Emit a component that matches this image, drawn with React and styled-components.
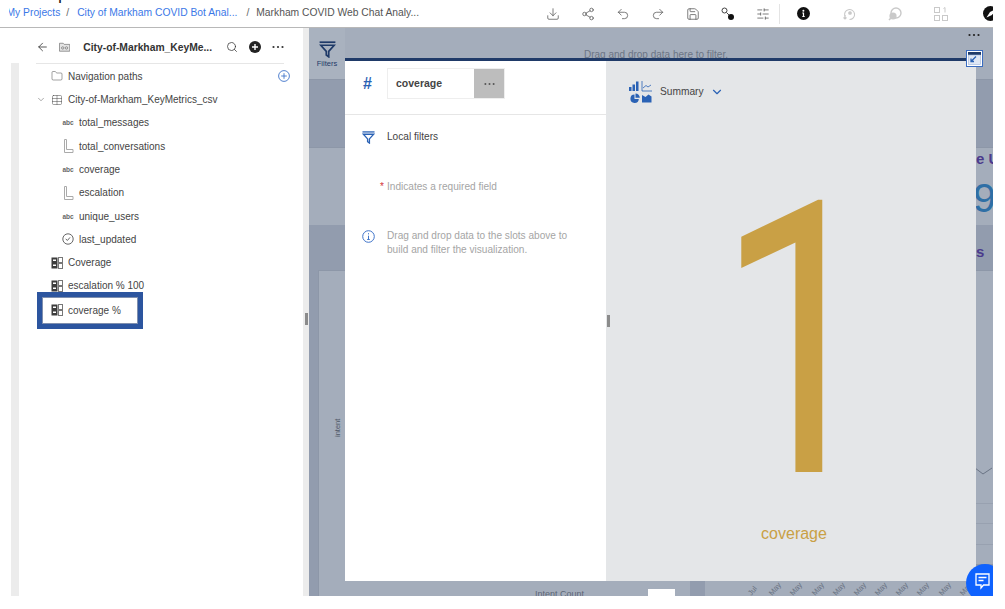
import React from 'react';
import styled, { createGlobalStyle } from 'styled-components';
import { ArrowLeft, ChevronDown, Download, Folder, Redo2, Save, Search, Share2, SlidersHorizontal, Table, Undo2 } from 'lucide-react';

const Global = createGlobalStyle`
  html, body { margin: 0; background: #fff; }
  body { font-family: 'Liberation Sans', Arial, sans-serif; color: #3d3d3d; }
`;

const Frame = styled.div`
  position: relative;
  width: 993px;
  height: 596px;
  overflow: hidden;
  display: flex;
  flex-direction: column;
  background: #fff;
`;

const TopBar = styled.header`
  position: relative;
  height: 27px;
  display: flex;
  align-items: center;
  justify-content: space-between;
  border-bottom: 1px solid #b8b8b8;
  padding-left: 9px;
  flex: none;
`;

// the page title is scrolled almost out of view in the reference
const ClippedTitle = styled.div`
  position: absolute;
  left: 27px;
  top: 0;
  height: 3px;
  overflow: hidden;
  font-size: 18px;
  line-height: 18px;
  color: #222;
  span { display: block; margin-top: -15px; }
`;

const Crumbs = styled.nav`
  display: flex;
  align-items: center;
  overflow: hidden;
  font-size: 10.3px;
  white-space: nowrap;
  height: 100%;
  padding-bottom: 2px;
  box-sizing: border-box;
`;

const Crumb = styled.span`
  color: ${({ current }) => (current ? '#555' : '#3b78e7')};
  margin-left: ${({ $clip }) => ($clip ? '-2.5px' : '0')};
`;

const Slash = styled.span`
  color: #666;
  margin: 0 ${({ wide }) => (wide ? '7px 0 9px' : '8px 0 6px')};
`;

const Tools = styled.div`
  display: flex;
  align-items: center;
  height: 100%;
  flex: none;
  margin-right: -23px;
`;

const ToolSlot = styled.span`
  width: ${({ w }) => w || 35}px;
  flex: none;
  display: flex;
  justify-content: center;
  color: ${({ faded }) => (faded ? '#c9c9c9' : '#555')};
`;

const ToolDivider = styled.span`
  width: 1px;
  height: 20px;
  background: #e4e4e4;
  margin-left: -1px;
  flex: none;
`;

const Body = styled.div`
  flex: 1;
  min-height: 0;
  display: flex;
`;

const Gutter = styled.div`
  width: 8px;
  margin-left: 11px;
  flex: none;
  background: linear-gradient(#fff 35px, #ececec 35px);
`;

const Panel = styled.aside`
  width: 284px;
  flex: none;
  background: #fff;
  padding: 0 19px 0 17px;
  box-sizing: border-box;
`;

const PanelHead = styled.div`
  height: 32px;
  margin-bottom: 0.6px;
  display: flex;
  align-items: center;
  gap: 10px;
  border-bottom: 1px solid #e6e6e6;
  padding-top: 3px;
  box-sizing: content-box;
  color: #333;
`;

const PanelTitle = styled.span`
  font-size: 10.3px;
  font-weight: bold;
  color: #333;
  margin-left: 3px;
  width: 142px;
  white-space: nowrap;
`;

const HeadIcons = styled.div`
  display: flex;
  align-items: center;
  gap: 11px;
`;

const Row = styled.div`
  height: 23.3px;
  display: flex;
  align-items: center;
  gap: 5px;
  font-size: 10px;
  color: #444;
  white-space: nowrap;
  padding-left: ${({ level }) => (level === 2 ? 26 : 15)}px;
`;

const SelectedRow = styled(Row)`
  position: relative;
  background: #fff;
  width: 86px;
  height: 25px;
  margin: 0 0 0 7px;
  padding-left: 8px;
  box-shadow: 0 0 0 1px #7f8fae, 0 0 0 6px #2c559f;
`;

const TypeTag = styled.span`
  width: 12px;
  font-size: 6.5px;
  font-weight: bold;
  color: #666;
  text-align: center;
`;

const Chevron = styled.span`
  display: flex;
  width: 10px;
  margin-left: -15px;
  color: #555;
`;

const AddPath = styled.span`
  margin-left: auto;
  margin-right: -6px;
  display: flex;
  color: #3f74c9;
`;

const Splitter = styled.div`
  width: 6px;
  flex: none;
  background: #ececec;
  display: flex;
  justify-content: center;
  padding-top: 285px;
  box-sizing: border-box;
`;

const Handle = styled.span`
  display: block;
  width: 3px;
  height: 12px;
  background: #8b8b8b;
`;

const Canvas = styled.main`
  position: relative;
  flex: 1;
  min-width: 0;
  display: flex;
  flex-direction: column;
  background: #929cae;
  overflow: hidden;
`;

const FilterBar = styled.div`
  height: 52px;
  flex: none;
  display: flex;
  background: #a4adbb;
  border-bottom: 1px solid #8d97a8;
  box-sizing: border-box;
`;

const FiltersTab = styled.div`
  width: 36px;
  display: flex;
  flex-direction: column;
  align-items: center;
  padding-top: 13px;
  box-sizing: border-box;
  color: #1f3a68;
  font-size: 7.5px;
  gap: 1px;
  background: #a9b2bf;
`;

const DropHint = styled.div`
  flex: 1;
  text-align: center;
  font-size: 10px;
  color: #6c7585;
  padding: 21px 0 0 0;
  margin-left: -26px;
`;

const Band = styled.div`
  height: ${({ h }) => h}px;
  flex: none;
  background: ${({ light }) => (light ? '#a4adbb' : '#929cae')};
  border-top: 1px solid ${({ light }) => (light ? '#8d97a8' : 'transparent')};
  box-sizing: border-box;
  display: flex;
  flex-direction: column;
  align-items: flex-end;
  overflow: hidden;
`;

const EdgeText = styled.span`
  width: 17px;
  white-space: nowrap;
  color: ${({ color }) => color};
  font-size: ${({ size }) => size}px;
  font-weight: ${({ weight }) => weight || 'bold'};
  line-height: ${({ lh }) => lh}px;
  margin-top: ${({ top }) => top || 0}px;
  margin-right: ${({ shift }) => shift || 0}px;
`;

const Cards = styled.div`
  flex: 1;
  min-height: 0;
  display: flex;
  padding-left: 9px;
`;

const GridCard = styled.div`
  flex: 372;
  background: #a4adbb;
  border-top: 1px solid #8d97a8;
  border-left: 1px solid #8d97a8;
  position: relative;
`;

const AxisLabel = styled.span`
  position: absolute;
  left: 14px;
  top: 148px;
  font-size: 7.5px;
  color: #4d5665;
  transform-origin: left top;
  transform: rotate(-90deg) translate(-18px, 0);
`;

const AxisTitle = styled.span`
  position: absolute;
  left: 216px;
  bottom: -3px;
  font-size: 9px;
  color: #5c6676;
`;

const PageTab = styled.span`
  position: absolute;
  left: 329px;
  bottom: 0;
  width: 27px;
  height: 7px;
  background: #fff;
`;

const ChartCard = styled.div`
  width: 288px;
  margin-left: 15px;
  background:
    linear-gradient(transparent 232px, #98a1b0 232px, #98a1b0 233px, transparent 233px),
    linear-gradient(transparent 252px, #98a1b0 252px, #98a1b0 253px, transparent 253px),
    linear-gradient(transparent 273px, #98a1b0 273px, #98a1b0 274px, transparent 274px),
    linear-gradient(transparent 293px, #8d97a8 293px, #8d97a8 295px, transparent 295px),
    #a4adbb;
  border-top: 1px solid #8d97a8;
  position: relative;
  display: flex;
  align-items: flex-end;
  justify-content: flex-end;
  gap: 8.2px;
  padding: 0 0 2px 0;
  box-sizing: border-box;
`;

const Tick = styled.span`
  font-size: 7.5px;
  width: 13px;
  color: #66707f;
  transform: rotate(-50deg);
  flex: none;
`;

const TrendMark = styled.svg`
  position: absolute;
  right: 1px;
  top: 196px;
`;

const Modal = styled.section`
  position: absolute;
  left: 36px;
  top: 30px;
  width: 631px;
  height: 523px;
  display: flex;
  border-top: 3px solid #1f3a68;
  box-sizing: border-box;
`;

const ModalLeft = styled.div`
  width: 261px;
  flex: none;
  background: #fff;
`;

const FieldRow = styled.div`
  height: 54px;
  display: flex;
  align-items: center;
  padding: 0 0 8px 18px;
  box-sizing: border-box;
  border-bottom: 1px solid #e6e6e6;
`;

const Hash = styled.span`
  width: 24px;
  font-size: 16px;
  font-weight: bold;
  color: #2a62b5;
`;

const FieldBox = styled.div`
  width: 118px;
  height: 31px;
  display: flex;
  border: 1px solid #eee;
  box-sizing: border-box;
  align-items: center;
  font-size: 10.5px;
  font-weight: bold;
  color: #444;
  padding-left: 8px;
`;

const FieldName = styled.span`
  margin-top: -2px;
`;

const FieldMore = styled.span`
  width: 30px;
  height: 100%;
  margin-left: auto;
  background: #bdbdbd;
  color: #555;
  display: flex;
  align-items: center;
  justify-content: center;
`;

const InfoRow = styled.div`
  display: flex;
  align-items: ${({ top }) => (top ? 'flex-start' : 'center')};
  padding-left: 17px;
  margin-top: ${({ mt }) => mt}px;
  font-size: 10.1px;
  line-height: 14px;
  color: ${({ muted }) => (muted ? '#a5a5a5' : '#444')};
`;

const InfoIcon = styled.span`
  width: 25px;
  flex: none;
  display: flex;
  padding-top: ${({ pt }) => pt || 0}px;
`;

const Required = styled.span`
  color: #d43a3a;
  width: 7px;
  margin-left: 18px;
  flex: none;
`;

const ModalRight = styled.div`
  flex: 1;
  background: #e4e6e8;
  position: relative;
  display: flex;
  flex-direction: column;
`;

const ModalSplit = styled.span`
  position: absolute;
  left: 1px;
  top: 254px;
  width: 3px;
  height: 12px;
  background: #8b8b8b;
`;

const VizPicker = styled.div`
  display: flex;
  align-items: center;
  padding: 19px 0 0 23px;
  font-size: 10.2px;
  color: #444;
  gap: 8px;
  height: 42px;
  box-sizing: border-box;
`;

const BigValue = styled.div`
  margin: 89px 0 0 18px;
  height: 300px;
  line-height: 300px;
  font-family: Roboto, 'Liberation Sans', sans-serif;
  font-size: 381px;
  color: #c9a045;
  text-align: center;
  transform: scaleX(0.78);
`;

const ValueLabel = styled.div`
  margin-top: 33px;
  margin-left: 6px;
  text-align: center;
  font-size: 16px;
  color: #c9a045;
`;

const ModalMenu = styled.span`
  position: absolute;
  left: 659px;
  top: 5px;
  display: flex;
  color: #222;
`;

const ExpandButton = styled.button`
  position: absolute;
  left: 657px;
  top: 22px;
  width: 17px;
  height: 17px;
  padding: 1px;
  border: 1px solid #3a6cc0;
  background: #fff;
  display: flex;
  box-sizing: border-box;
`;

const ChatButton = styled.button`
  position: absolute;
  left: 966px;
  top: 564px;
  width: 38px;
  height: 38px;
  border-radius: 50%;
  border: none;
  background: #0f62fe;
  color: #fff;
  padding: 9px 0 0 9px;
  display: flex;
  box-sizing: border-box;
`;

const Dots = ({ size = 12, color = 'currentColor' }) => (
  <svg width={size} height={4} viewBox="0 0 12 4" fill={color}>
    <circle cx="1.5" cy="2" r="1.1" /><circle cx="6" cy="2" r="1.1" /><circle cx="10.5" cy="2" r="1.1" />
  </svg>
);

const Funnel = ({ size = 14, color = '#2a62b5', sw = 1.4 }) => (
  <svg width={size} height={size} viewBox="0 0 14 14" fill="none" stroke={color} strokeWidth={sw}>
    <path d="M0.5 1h13" />
    <path d="M1.5 3.5h11L8 8.5v4.5L6 11.5v-3z" />
  </svg>
);

const Measure = () => (
  <svg width="12" height="14" viewBox="0 0 12 14" fill="none" stroke="#aaa" strokeWidth="1">
    <path d="M2.5 0.5h2v10h6.500v3h-8.500z" />
  </svg>
);

const Clock = () => (
  <svg width="12" height="12" viewBox="0 0 12 12" fill="none" stroke="#555" strokeWidth="0.9">
    <circle cx="6" cy="6" r="5.2" /><path d="M3.700 6l1.800 1.400L8 4.400" />
  </svg>
);

const Calc = () => (
  <svg width="12" height="12" viewBox="0 0 12 12">
    <rect x="0.500" y="0.500" width="6" height="11" fill="#3d3d3d" />
    <rect x="2" y="2.500" width="3" height="1.500" fill="#fff" /><rect x="2" y="7.500" width="3" height="1.500" fill="#fff" />
    <rect x="7.500" y="0.500" width="4" height="5" fill="none" stroke="#777" />
    <rect x="7.500" y="6.500" width="4" height="5" fill="none" stroke="#777" />
  </svg>
);

const SourceIcon = () => (
  <svg width="12" height="10" viewBox="0 0 12 10" fill="#e4e4e4" stroke="#777" strokeWidth="0.8">
    <path d="M0.500 1h4l1 1.200h6v7.300h-11z" />
    <circle cx="4" cy="6" r="1.300" fill="none" /><circle cx="8" cy="6" r="1.300" fill="none" />
  </svg>
);

const PlusFilled = () => (
  <svg width="12" height="12" viewBox="0 0 12 12">
    <circle cx="6" cy="6" r="6" fill="#222" /><path d="M6 3v6M3 6h6" stroke="#fff" strokeWidth="1.400" />
  </svg>
);

const PlusOutline = () => (
  <svg width="12" height="12" viewBox="0 0 12 12" fill="none" stroke="currentColor" strokeWidth="0.9">
    <circle cx="6" cy="6" r="5.400" /><path d="M6 3.200v5.600M3.200 6h5.600" />
  </svg>
);

const InfoFilled = () => (
  <svg width="13" height="13" viewBox="0 0 13 13">
    <circle cx="6.500" cy="6.500" r="6.500" fill="#111" />
    <path d="M5.300 5.600h1.800v3.600h0.800v0.900H5.100v-0.900h0.800V6.500h-0.600z" fill="#fff" /><circle cx="6.400" cy="3.800" r="1" fill="#fff" />
  </svg>
);

const InfoOutline = () => (
  <svg width="13" height="13" viewBox="0 0 13 13" fill="none" stroke="#3f74c9" strokeWidth="1">
    <circle cx="6.500" cy="6.500" r="5.800" /><path d="M6.500 5.700v3.800M5.200 9.500h2.600" /><path d="M6.500 3.200v1.200" />
  </svg>
);

const Nodes = () => (
  <svg width="14" height="14" viewBox="0 0 14 14" fill="none" stroke="#444">
    <circle cx="3.500" cy="3.500" r="2.500" /><path d="M5.500 5.500l3 3" /><circle cx="10" cy="10" r="3" fill="#111" stroke="none" />
  </svg>
);

const Insight = () => (
  <svg width="14" height="14" viewBox="0 0 14 14" fill="none" stroke="currentColor" strokeWidth="1.100">
    <path d="M3 9.500A5 5 0 1 1 7.500 12.500" /><circle cx="8" cy="6" r="1.300" fill="currentColor" /><path d="M3 8v4M1.500 10.500L3 12l1.500-1.500" />
  </svg>
);

const Lookup = () => (
  <svg width="14" height="14" viewBox="0 0 14 14" fill="currentColor">
    <circle cx="8" cy="6" r="5" fill="none" stroke="currentColor" strokeWidth="1.400" /><path d="M4 10l-3 3" stroke="currentColor" strokeWidth="1.600" /><circle cx="5" cy="9" r="3.600" />
  </svg>
);

const Layout = () => (
  <svg width="14" height="14" viewBox="0 0 14 14" fill="none" stroke="currentColor">
    <rect x="0.500" y="0.500" width="5" height="5" /><rect x="0.500" y="8.500" width="5" height="5" /><rect x="8.500" y="8.500" width="5" height="5" /><path d="M9.500 1.500l1.500-1v5" />
  </svg>
);

const Compass = () => (
  <svg width="15" height="15" viewBox="0 0 15 15">
    <circle cx="7.500" cy="7.500" r="7.500" fill="#111" /><path d="M3.500 11.500L7 6l5-2.500L9 9z" fill="#fff" />
  </svg>
);

const VizIcon = () => (
  <svg width="23" height="22" viewBox="0 0 23 22" fill="#2a62b5">
    <rect x="0" y="6" width="2.500" height="4" /><rect x="3.500" y="3.500" width="2.500" height="6.500" /><rect x="7" y="0.500" width="2.500" height="9.500" />
    <path d="M13 0v10h10M14 7l3-2.500 2 1.500 3-2" fill="none" stroke="#2a62b5" strokeWidth="0.800" />
    <path d="M5.500 13.500A4.200 4.200 0 1 0 9.800 18H5.500z" /><path d="M6.500 12.500v4.300h4.300a4.300 4.300 0 0 0-4.300-4.300z" />
    <path d="M13 14l3.500 2 3-2.500 3 2v6H13z" />
  </svg>
);

const ExpandIcon = () => (
  <svg width="13" height="13" viewBox="0 0 13 13">
    <rect x="0" y="0" width="13" height="3" fill="#1f3a68" />
    <rect x="0.500" y="3" width="12" height="9.500" fill="#dfe7f4" stroke="#9db5da" strokeWidth="0.600" />
    <path d="M8 4.500l-5 5M3 6.500v3h3" fill="none" stroke="#2a62b5" strokeWidth="1.300" />
  </svg>
);

const ChatIcon = () => (
  <svg width="15" height="17" viewBox="0 0 15 17" fill="none" stroke="currentColor" strokeWidth="1.300">
    <path d="M1 1h13v11H8.500L6 15v-3H1z" /><path d="M3.500 4.500h8M3.500 7.500h5" />
  </svg>
);

const thin = { size: 14, strokeWidth: 1.3 };

const fields = [
  { kind: 'abc', name: 'total_messages' },
  { kind: 'measure', name: 'total_conversations' },
  { kind: 'abc', name: 'coverage' },
  { kind: 'measure', name: 'escalation' },
  { kind: 'abc', name: 'unique_users' },
  { kind: 'clock', name: 'last_updated' },
];

const ticks = ['Jul', 'May', 'May', 'May', 'May', 'May', 'May', 'May', 'May', 'May', 'May', 'May'];

const FieldIcon = ({ kind }) => {
  if (kind === 'abc') return <TypeTag>abc</TypeTag>;
  if (kind === 'measure') return <Measure />;
  return <Clock />;
};

const App = () => (
  <>
    <Global />
    <Frame>
      <TopBar>
        <ClippedTitle><span>Scope</span></ClippedTitle>
        <Crumbs>
          <Crumb $clip>My Projects</Crumb>
          <Slash>/</Slash>
          <Crumb>City of Markham COVID Bot Anal...</Crumb>
          <Slash wide>/</Slash>
          <Crumb current>Markham COVID Web Chat Analy...</Crumb>
        </Crumbs>
        <Tools>
          <ToolSlot><Download {...thin} /></ToolSlot>
          <ToolSlot><Share2 {...thin} /></ToolSlot>
          <ToolSlot><Undo2 {...thin} /></ToolSlot>
          <ToolSlot><Redo2 {...thin} /></ToolSlot>
          <ToolSlot><Save {...thin} /></ToolSlot>
          <ToolSlot><Nodes /></ToolSlot>
          <ToolSlot><SlidersHorizontal {...thin} /></ToolSlot>
          <ToolDivider />
          <ToolSlot w={46}><InfoFilled /></ToolSlot>
          <ToolSlot w={46} faded><Insight /></ToolSlot>
          <ToolSlot w={46} faded><Lookup /></ToolSlot>
          <ToolSlot w={46} faded><Layout /></ToolSlot>
          <ToolSlot w={52}><Compass /></ToolSlot>
        </Tools>
      </TopBar>
      <Body>
        <Gutter />
        <Panel>
          <PanelHead>
            <ArrowLeft size={14} strokeWidth={1.5} />
            <SourceIcon />
            <PanelTitle>City-of-Markham_KeyMe...</PanelTitle>
            <HeadIcons>
              <Search size={12} strokeWidth={1.5} />
              <PlusFilled />
              <Dots />
            </HeadIcons>
          </PanelHead>
          <Row>
            <Folder size={12} strokeWidth={1} />
            Navigation paths
            <AddPath><PlusOutline /></AddPath>
          </Row>
          <Row>
            <Chevron><ChevronDown size={11} strokeWidth={1.2} /></Chevron>
            <Table size={12} strokeWidth={1} />
            City-of-Markham_KeyMetrics_csv
          </Row>
          {fields.map((f) => (
            <Row level={2} key={f.name}>
              <FieldIcon kind={f.kind} />
              {f.name}
            </Row>
          ))}
          <Row><Calc />Coverage</Row>
          <Row><Calc />escalation % 100</Row>
          <SelectedRow><Calc />coverage %</SelectedRow>
        </Panel>
        <Splitter><Handle /></Splitter>
        <Canvas>
          <FilterBar>
            <FiltersTab>
              <Funnel size={17} color="#1f3a68" />
              Filters
            </FiltersTab>
            <DropHint>Drag and drop data here to filter.</DropHint>
          </FilterBar>
          <Band h={67} />
          <Band h={78} light>
            <EdgeText color="#4b3a8c" size={15} lh={20} top={1}>e U</EdgeText>
            <EdgeText color="#2f6fa5" size={41} lh={42} weight="normal" top={8} shift={3}>9</EdgeText>
          </Band>
          <Band h={45}>
            <EdgeText color="#4b3a8c" size={15} lh={20} top={16}>s</EdgeText>
          </Band>
          <Cards>
            <GridCard>
              <AxisLabel>intent</AxisLabel>
              <AxisTitle>Intent Count</AxisTitle>
              <PageTab />
            </GridCard>
            <ChartCard>
              <TrendMark width="17" height="8" viewBox="0 0 17 8" fill="none" stroke="#6a7484">
                <path d="M0 1l8 6 9-6" />
              </TrendMark>
              {ticks.map((t, i) => <Tick key={i}>{t}</Tick>)}
            </ChartCard>
          </Cards>
          <Modal>
            <ModalLeft>
              <FieldRow>
                <Hash>#</Hash>
                <FieldBox>
                  <FieldName>coverage</FieldName>
                  <FieldMore><Dots size={11} /></FieldMore>
                </FieldBox>
              </FieldRow>
              <InfoRow mt={15}>
                <InfoIcon><Funnel size={13} /></InfoIcon>
                Local filters
              </InfoRow>
              <InfoRow mt={36} muted>
                <Required>*</Required>
                Indicates a required field
              </InfoRow>
              <InfoRow mt={35} muted top>
                <InfoIcon pt={1}><InfoOutline /></InfoIcon>
                <span>Drag and drop data to the slots above to<br />build and filter the visualization.</span>
              </InfoRow>
            </ModalLeft>
            <ModalRight>
              <ModalSplit />
              <VizPicker>
                <VizIcon />
                Summary
                <ChevronDown size={14} color="#2a62b5" strokeWidth={2} style={{ marginLeft: -2 }} />
              </VizPicker>
              <BigValue>1</BigValue>
              <ValueLabel>coverage</ValueLabel>
            </ModalRight>
          </Modal>
          <ModalMenu><Dots /></ModalMenu>
          <ExpandButton><ExpandIcon /></ExpandButton>
        </Canvas>
      </Body>
      <ChatButton><ChatIcon /></ChatButton>
    </Frame>
  </>
);

export default App;
